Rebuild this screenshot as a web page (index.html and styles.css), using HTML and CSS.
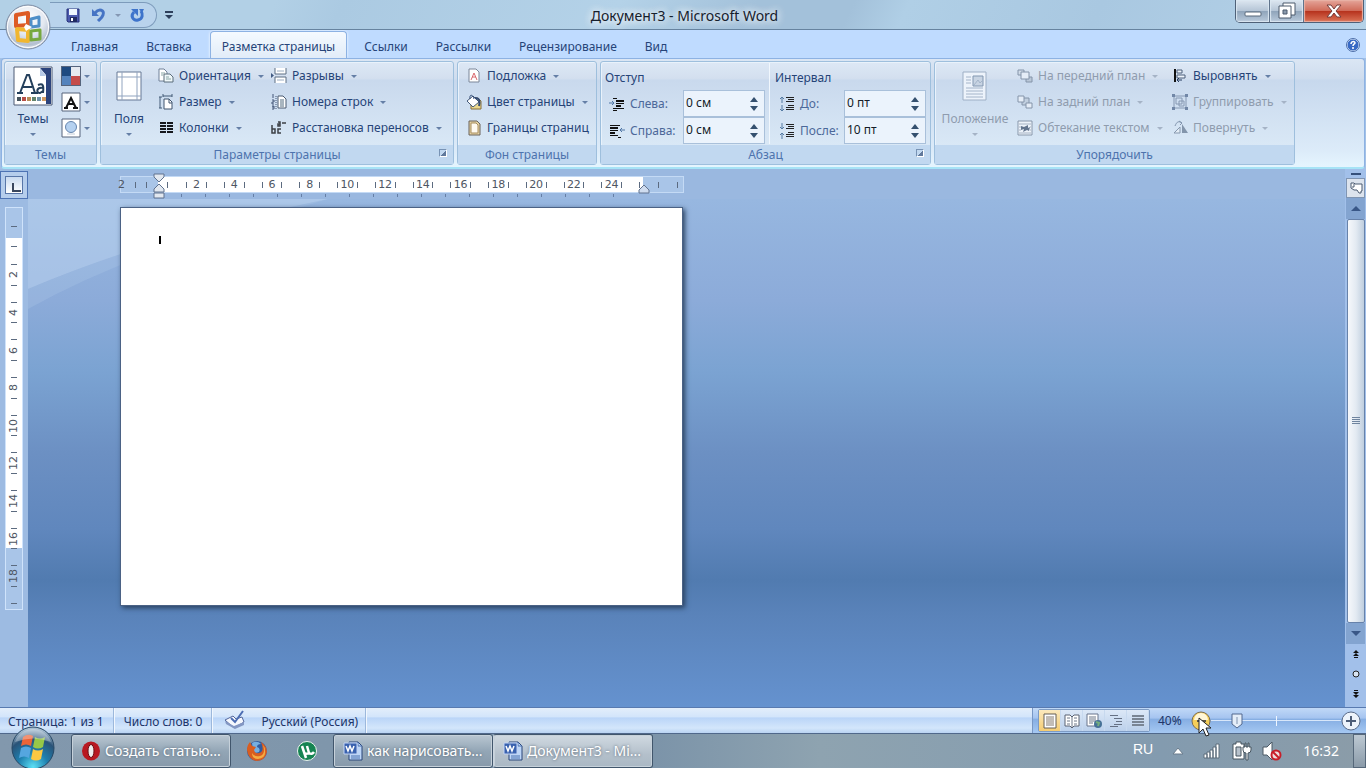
FILE: index.html
```html
<!DOCTYPE html>
<html lang="ru">
<head>
<meta charset="utf-8">
<title>Документ3 - Microsoft Word</title>
<link rel="stylesheet" href="styles.css">
</head>
<body>
<header class="titlebar">
  <button class="office" aria-label="Кнопка Office">
    <svg viewBox="0 0 46 46"><defs><radialGradient id="orb" cx=".5" cy=".3" r=".75"><stop offset="0" stop-color="#fff"/><stop offset=".5" stop-color="#e3e8f0"/><stop offset=".8" stop-color="#b3bfd0"/><stop offset="1" stop-color="#f4f8fc"/></radialGradient></defs>
      <circle cx="23" cy="23" r="22" fill="url(#orb)" stroke="#7d8ca3"/><circle cx="23" cy="23" r="20.500" fill="none" stroke="#fff"/>
      <g fill="none" stroke-linejoin="round"><path d="M11 11l12-2v12l-12 1z" stroke="#dd5b25" stroke-width="4"/><path d="M26 15l8-2v9l-8 1z" stroke="#4f8fc8" stroke-width="3"/><path d="M12 25l11 1v11l-10-1z" stroke="#f1b62f" stroke-width="4"/><path d="M26 27l9-1v9l-9 1z" stroke="#76a83e" stroke-width="3"/></g>
      <path d="M21 20l6 3-6 4-2-4z" fill="#fff"/></svg>
  </button>
  <div class="qat">
    <button aria-label="Сохранить"><svg class="ic" viewBox="0 0 16 16"><path d="M2 2h12v13H3l-1-1z" fill="#4b59ad" stroke="#28337b"/><path d="M4 2h8v6H4z" fill="#eef5fd"/><path d="M5 10h7v5H5z" fill="#202a60"/><path d="M6 11h2v3H6z" fill="#fff"/></svg></button>
    <button aria-label="Отменить"><svg class="ic" viewBox="0 0 16 16"><path d="M4 6c4-5 10-3 8 2-1 3-3 4-5 6" fill="none" stroke="#4674c4" stroke-width="3"/><path d="M1 2v7h7z" fill="#4674c4"/></svg></button>
    <button class="narrow" aria-label="Список отмены"><i class="arr dim"></i></button>
    <button aria-label="Повторить"><svg class="ic" viewBox="0 0 16 16"><path d="M5 5c-4 4-1 9 4 8 5-1 5-6 3-9" fill="none" stroke="#3e74cb" stroke-width="3"/><path d="M2 2h7v7zM10 2h5l-2 4z" fill="#3e74cb"/></svg></button>
  </div>
  <button class="more" aria-label="Настройка панели"><i class="arr dark"></i></button>
  <h1>Документ3 - Microsoft Word</h1>
  <div class="winbtns">
    <button aria-label="Свернуть"><svg viewBox="0 0 18 18"><rect x="1" y="10" width="16" height="4" rx="1" fill="#fff" stroke="#59687b"/></svg></button>
    <button aria-label="Восстановить"><svg viewBox="0 0 18 18"><g fill="#fff" stroke="#4d5b6c"><path d="M5 1h12v12H5z"/><path d="M1 4h12v12H1z"/><path d="M5 8h4v4H5z" fill="#8b9aac"/></g></svg></button>
    <button class="close" aria-label="Закрыть"><svg viewBox="0 0 18 18"><path d="M2 3h4l3 4 3-4h4l-5 6 5 6h-4l-3-4-3 4H2l5-6z" fill="#fff" stroke="#743c3b"/></svg></button>
  </div>
</header>

<nav class="tabs">
  <button>Главная</button><button>Вставка</button><button class="on">Разметка страницы</button><button>Ссылки</button><button>Рассылки</button><button>Рецензирование</button><button>Вид</button>
  <button class="help" aria-label="Справка"><svg viewBox="0 0 14 14"><circle cx="7" cy="7" r="6" fill="#3869c4" stroke="#d9e9ff"/><circle cx="7" cy="7" r="6.500" fill="none" stroke="#4e6fa8"/><path d="M5 6c0-3 4-3 4-1 0 1-2 1-2 3M7 9v2" fill="none" stroke="#fff" stroke-width="1.500"/></svg></button>
</nav>

<main class="ribbon">
  <section class="group themes">
    <div class="body">
      <button class="big"><svg viewBox="0 0 40 40"><path d="M1 1h38v38H1z" fill="#fff" stroke="#4d5b75"/><path d="M27 2h11v36h-5V9z" fill="#2b437c"/><path d="M27 2l6 8h-6z" fill="#b6c9e6"/><path d="M7 27l7-18h2l6 18M10 21h9M4 27h6M18 27h7" fill="none" stroke="#243f5b" stroke-width="2"/><path d="M25 19c5-2 6 0 5 8M30 22c-7-1-7 5-3 5l3-2" fill="none" stroke="#243f5b" stroke-width="2"/><path d="M4 31h4v4H4z" fill="#46545d"/><path d="M9 31h4v4H9z" fill="#b84e46"/><path d="M14 31h4v4h-4z" fill="#b88c58"/><path d="M19 31h4v4h-4z" fill="#63846b"/><path d="M24 31h4v4h-4z" fill="#6d91a8"/><path d="M29 31h4v4h-4z" fill="#d19b64"/></svg><span>Темы</span><i class="arr"></i></button>
      <div class="minis">
        <button aria-label="Цвета"><svg viewBox="0 0 20 20"><path d="M0 0h10v10H0z" fill="#1e4a80"/><path d="M10 0h10v10H10z" fill="#e6e9f0"/><path d="M0 10h10v10H0z" fill="#5483bd"/><path d="M10 10h10v10H10z" fill="#c44c4b"/><path d="M0 0h20v20H0z" fill="none" stroke="#56647c" stroke-width="2"/></svg><i class="arr"></i></button>
        <button aria-label="Шрифты"><svg viewBox="0 0 20 20"><path d="M1 1h18v18H1z" fill="#fff" stroke="#56647c"/><path d="M5 16L10 6l5 10M7 12h6M3 16h4M12 16h5" fill="none" stroke="#111" stroke-width="2"/></svg><i class="arr"></i></button>
        <button aria-label="Эффекты"><svg viewBox="0 0 20 20"><path d="M1 1h18v18H1z" fill="#fff" stroke="#56647c"/><circle cx="10" cy="9" r="5.500" fill="#b5d1f0" stroke="#6685ae"/><path d="M6 16h8" stroke="#c3ccd8"/></svg><i class="arr"></i></button>
      </div>
    </div>
    <footer>Темы</footer>
  </section>
  <section class="group params">
    <div class="body">
      <button class="big"><svg viewBox="0 0 40 40"><path d="M8 6h24v28H8z" fill="#fff" stroke="#667995"/><path d="M13 6v28M28 6v28M8 11h24M8 30h24" stroke="#91a4bf"/></svg><span>Поля</span><i class="arr"></i></button>
      <div class="col c1">
        <button><svg class="ic" viewBox="0 0 16 16"><path d="M1 1h5l3 3v9H1z" fill="#fff" stroke="#718199"/><path d="M6 6h6l3 3v5H6z" fill="#eff7f9" stroke="#5b6d7b"/><path d="M3 5h4M3 7h2M8 9h3M8 11h5" stroke="#8ba7a6"/></svg>Ориентация<i class="arr"></i></button>
        <button><svg class="ic" viewBox="0 0 16 16"><path d="M6 5h5l3 3v7H6z" fill="#fff" stroke="#40546e"/><path d="M11 5v4h3" fill="none" stroke="#40546e"/><path d="M1 3h3M2 3v11M1 14h3M5 2h9M5 0v3M14 0v3" fill="none" stroke="#435a76"/></svg>Размер<i class="arr"></i></button>
        <button><svg class="ic" viewBox="0 0 16 16"><path d="M2 2h6v2H2zM2 5h6v2H2zM2 8h6v2H2zM2 11h6v2H2zM9 2h6v2H9zM9 5h6v2H9zM9 8h6v2H9zM9 11h6v2H9z" fill="#16181d"/></svg>Колонки<i class="arr"></i></button>
      </div>
      <div class="col c2">
        <button><svg class="ic" viewBox="0 0 16 16"><path d="M4 0v6h11V0M4 15V9h11v6" fill="#fff" stroke="#5c6f83"/><path d="M6 3h7M6 12h7" stroke="#9caec3"/><path d="M0 5v5l3-2.500z" fill="#415b83"/></svg>Разрывы<i class="arr"></i></button>
        <button><svg class="ic" viewBox="0 0 16 16"><path d="M7 2h5l3 3v9H7z" fill="#fff" stroke="#4b5b70"/><path d="M9 6h4M9 8h4M9 10h4M9 12h4" stroke="#526c80"/><path d="M2 0v4M1 6h2v2H1v2h2M1 12h2v1H1M3 13v2H1" fill="none" stroke="#425576"/><path d="M5 2v13" stroke="#425576" stroke-dasharray="1 1"/></svg>Номера строк<i class="arr"></i></button>
        <button><svg class="ic" viewBox="0 0 16 16"><path d="M1 5v8h3V9H1M7 2h2v4H7V4h2M11 3h4M10 9H7v4h3" fill="none" stroke="#3d4046" stroke-width="1.500"/></svg>Расстановка переносов<i class="arr"></i></button>
      </div>
    </div>
    <footer>Параметры страницы<button class="launch" aria-label="Параметры страницы"></button></footer>
  </section>
  <section class="group background">
    <div class="body">
      <div class="col">
        <button><svg class="ic" viewBox="0 0 16 16"><path d="M3 1h7l3 3v10H3z" fill="#fff" stroke="#7a8699"/><path d="M5 12l3-7 3 7M6 9h4" fill="none" stroke="#d9696e"/></svg>Подложка<i class="arr"></i></button>
        <button><svg class="ic" viewBox="0 0 16 16"><path d="M5 4h7l3 3v8H5z" fill="#edd98e" stroke="#856f3a"/><path d="M1 7l6-5 6 6-6 5z" fill="#fff" stroke="#445a79"/><path d="M4 5c-1-5 3-5 4 0" fill="none" stroke="#344c76"/><path d="M9 4c5 0 5 4 4 8" fill="none" stroke="#344c76" stroke-width="2"/></svg>Цвет страницы<i class="arr"></i></button>
        <button><svg class="ic" viewBox="0 0 16 16"><path d="M3 1h8l3 3v11H3z" fill="#e3d2a6" stroke="#6a635a"/><path d="M5 3h5l2 2v8H5z" fill="#fffaf1" stroke="#a98e5e"/></svg>Границы страниц</button>
      </div>
    </div>
    <footer>Фон страницы</footer>
  </section>
  <section class="group para">
    <div class="body">
      <div class="spin">
        <b>Отступ</b>
        <div class="row"><svg class="ic" viewBox="0 0 16 16"><path d="M4 2h4v1H4zM7 4h8v2H7zM7 7h8v1H7zM7 9h5v2H7zM4 12h11v1H4zM4 14h4v1H4z" fill="#111"/><path d="M0 7h5M3 5l2 2-2 2" fill="none" stroke="#4f76a6"/></svg><label for="left">Слева:</label><span class="num"><input id="left" value="0 см"><span><button aria-label="Больше"></button><button aria-label="Меньше"></button></span></span></div>
        <div class="row"><svg class="ic" viewBox="0 0 16 16"><path d="M1 2h10v1H1zM1 4h8v2H1zM1 7h8v1H1zM1 9h5v2H1zM1 12h8v1H1zM9 14h3v1H9z" fill="#111"/><path d="M16 7h-5M13 5l-2 2 2 2" fill="none" stroke="#4f76a6"/></svg><label for="right">Справа:</label><span class="num"><input id="right" value="0 см"><span><button aria-label="Больше"></button><button aria-label="Меньше"></button></span></span></div>
      </div>
      <div class="spin second">
        <b>Интервал</b>
        <div class="row"><svg class="ic" viewBox="0 0 16 16"><path d="M7 1h8v1H7zM9 3h6v1H9zM7 5h8v1H7zM9 9h6v1H9zM7 11h8v1H7zM7 13h8v1H7z" fill="#222"/><path d="M3 7V1M1 3l2-2 2 2M3 9v6M1 13l2 2 2-2" fill="none" stroke="#557ba3"/></svg><label for="before">До:</label><span class="num"><input id="before" value="0 пт"><span><button aria-label="Больше"></button><button aria-label="Меньше"></button></span></span></div>
        <div class="row"><svg class="ic" viewBox="0 0 16 16"><path d="M7 1h8v1H7zM9 3h6v1H9zM7 5h8v1H7zM9 9h6v1H9zM7 11h8v1H7zM7 13h8v1H7z" fill="#222"/><path d="M3 0v6M1 4l2 2 2-2M3 16v-6M1 12l2-2 2 2" fill="none" stroke="#557ba3"/></svg><label for="after">После:</label><span class="num"><input id="after" value="10 пт"><span><button aria-label="Больше"></button><button aria-label="Меньше"></button></span></span></div>
      </div>
    </div>
    <footer>Абзац<button class="launch" aria-label="Абзац"></button></footer>
  </section>
  <section class="group arrange">
    <div class="body">
      <button class="big off" disabled><svg viewBox="0 0 40 40"><path d="M8 6h23v28H8z" fill="#edf3fb" stroke="#9eafc5"/><path d="M18 10h10v10H18z" fill="#c8d4e3" stroke="#8297b1"/><path d="M19 19l4-5 2 3 3-3M11 11h5M11 14h5M11 17h5M11 22h17M11 25h17M11 28h17M11 31h17" fill="none" stroke="#a4b4c9"/></svg><span>Положение</span><i class="arr"></i></button>
      <div class="col c1">
        <button disabled><svg class="ic" viewBox="0 0 16 16"><g stroke="#8494a9"><path d="M1 2h6v5H1z" fill="#d0dbe8"/><path d="M9 9h6v5H9z" fill="#b9c7d8"/><path d="M4 4h8v7H4z" fill="#e5edf7"/></g></svg>На передний план<i class="arr"></i></button>
        <button disabled><svg class="ic" viewBox="0 0 16 16"><g stroke="#8494a9"><path d="M5 4h7v7H5z" fill="#c1cfdf"/><path d="M1 2h6v6H1zM9 9h6v5H9z" fill="#e5edf7"/></g></svg>На задний план<i class="arr"></i></button>
        <button disabled><svg class="ic" viewBox="0 0 16 16"><path d="M1 1h14v14H1z" fill="#edf3fa" stroke="#8796aa"/><path d="M2 4h12M2 7h2M13 7h1M2 10h2M13 10h1M2 13h12" stroke="#a6b3c4"/><path d="M4 6l3 1 4-2v3l2-1-1 4-2-1-4 2 1-3-3 1z" fill="#63758e"/></svg>Обтекание текстом<i class="arr"></i></button>
      </div>
      <div class="col c2">
        <button><svg class="ic" viewBox="0 0 16 16"><path d="M3 1v13" stroke="#111" stroke-width="2"/><path d="M5 2h5v3H5zM5 7h8v3H5z" fill="#eef4fb" stroke="#4c5f7b"/><path d="M5 12h5M7 10l-2 2 2 2" fill="none" stroke="#253b5e"/></svg>Выровнять<i class="arr"></i></button>
        <button disabled><svg class="ic" viewBox="0 0 16 16"><path d="M2 2h12v12H2zM4 4h6v6H4zM7 7h5v5H7z" fill="none" stroke="#8698b2"/><path d="M0 0h3v3H0zM13 0h3v3h-3zM0 13h3v3H0zM13 13h3v3h-3z" fill="#7187a7"/></svg>Группировать<i class="arr"></i></button>
        <button disabled><svg class="ic" viewBox="0 0 16 16"><path d="M8 13V7l-6 6z" fill="#e4edf6" stroke="#8798ae"/><path d="M10 13V4l6 9z" fill="#8395ab"/><path d="M3 6c2-5 4-5 7-3M7 1l3 2-2 2" fill="none" stroke="#8295ae"/></svg>Повернуть<i class="arr"></i></button>
      </div>
    </div>
    <footer>Упорядочить</footer>
  </section>
</main>

<div class="work">
  <aside class="vside">
    <button class="tabstop" aria-label="Табуляция"><span></span></button>
    <div class="vruler"><i class="lead"></i><div class="vcells"><span><b>2</b></span><span><b>4</b></span><span><b>6</b></span><span><b>8</b></span><span><b>10</b></span><span><b>12</b></span><span><b>14</b></span><span><b>16</b></span><span><b>18</b></span></div><i class="tail"></i></div>
  </aside>
  <div class="center">
    <div class="hbar"><div class="hruler">
      <div class="lead"><b>2</b><i></i><i></i></div>
      <div class="cells"><i></i><div><b>2</b></div><div><b>4</b></div><div><b>6</b></div><div><b>8</b></div><div><b>10</b></div><div><b>12</b></div><div><b>14</b></div><div><b>16</b></div><div><b>18</b></div><div><b>20</b></div><div><b>22</b></div><div><b>24</b></div><i></i></div>
      <div class="tail"><i></i><i></i></div>
      <svg class="mark m1" viewBox="0 0 12 26"><path d="M1 1h10v3L6 9 1 4zM6 11l5 5v3H1v-3zM1 20h10v5H1z" fill="#e2e8f0" stroke="#61738f"/></svg>
      <svg class="mark m2" viewBox="0 0 12 10"><path d="M6 1l5 5v3H1V6z" fill="#cfdcef" stroke="#61738f"/></svg>
    </div></div>
    <div class="canvas">
      <svg class="swoosh" viewBox="0 0 300 110" preserveAspectRatio="none"><path d="M0 0h300Q130 35 0 90z" fill="#c6dcf4" opacity=".45"/><path d="M0 90Q130 35 300 0L200 30Q90 60 0 110z" fill="#bdd5f2" opacity=".2"/></svg>
      <article class="page" contenteditable="true" aria-label="Документ"><i class="caret"></i></article>
    </div>
  </div>
  <aside class="scroll">
    <i class="split"></i>
    <button class="rulerbtn" aria-label="Линейка"><svg viewBox="0 0 14 14"><path d="M2 2h3l1 1h7v7h-1v2h-2L8 9H5L2 7z" fill="#fff" stroke="#4b5a70"/><path d="M5 3v3H3" fill="none" stroke="#4b5a70"/></svg></button>
    <button class="up" aria-label="Вверх"></button>
    <div class="thumb"><i></i></div>
    <button class="down" aria-label="Вниз"></button>
    <button class="jump" aria-label="Предыдущая страница"><svg viewBox="0 0 10 10"><path d="M5 1l3 3H2zM5 4l3 3H2zM3 8h4v1H3z" fill="#111"/></svg></button>
    <button class="jump" aria-label="Выбор объекта"><svg viewBox="0 0 10 10"><circle cx="5" cy="5" r="3" fill="#d9e4f2" stroke="#222"/></svg></button>
    <button class="jump" aria-label="Следующая страница"><svg viewBox="0 0 10 10"><path d="M3 1h4v1H3zM2 3h6L5 6zM2 6h6L5 9z" fill="#111"/></svg></button>
  </aside>
</div>

<footer class="status">
  <span>Страница: 1 из 1</span><span>Число слов: 0</span>
  <span class="lang"><svg viewBox="0 0 22 20"><path d="M1 10l8-4 3 3 6-2 2 5-10 6z" fill="#f5f8fe" stroke="#53669b"/><path d="M1 11l9 5 10-4v3l-9 4-9-5z" fill="#8498c4"/><path d="M7 8l4 4 8-11" fill="none" stroke="#4c6db3" stroke-width="2"/></svg>Русский (Россия)</span>
  <div class="right">
    <div class="views">
      <button class="on" aria-label="Разметка страницы"><svg viewBox="0 0 18 16"><path d="M3 1h12v14H3z" fill="#fff" stroke="#655f57"/><path d="M5 4h8M5 6h8M5 8h8M5 10h8M5 12h8" stroke="#847b6f"/></svg></button>
      <button aria-label="Режим чтения"><svg viewBox="0 0 18 16"><path d="M2 2h5l2 2 2-2h5v11h-5l-2 2-2-2H2z" fill="#fff" stroke="#5a6272"/><path d="M9 4v10M4 5h3M4 8h3M4 11h3M11 5h3M11 8h3M11 11h3" stroke="#6f7888"/></svg></button>
      <button aria-label="Веб-документ"><svg viewBox="0 0 18 16"><path d="M2 1h11v12H2z" fill="#fff" stroke="#69758c"/><path d="M4 4h7M4 6h7M4 8h7M4 10h4" stroke="#6f7888"/><circle cx="13" cy="11" r="4" fill="#467197"/><path d="M11 9l3 1-1 3" fill="none" stroke="#73ad7e" stroke-width="2"/></svg></button>
      <button aria-label="Структура"><svg viewBox="0 0 18 16"><path d="M3 2h8v1H3zM7 5h8v1H7zM9 8h6v1H9zM7 11h8v1H7zM3 13h8v1H3z" fill="#667184"/></svg></button>
      <button aria-label="Черновик"><svg viewBox="0 0 18 16"><path d="M3 2h12v2H3zM3 5h12v2H3zM3 8h12v2H3zM3 11h12v2H3z" fill="#7a8594"/></svg></button>
    </div>
    <label for="zoom">40%</label>
    <button class="round minus" aria-label="Уменьшить"><svg viewBox="0 0 20 20"><circle cx="10" cy="10" r="9" fill="#f5ce58" stroke="#7c6c52"/><path d="M3 9a7 7 0 0114 0z" fill="#fff6d7"/><path d="M6 10h9" stroke="#5c5646" stroke-width="2"/></svg><svg class="cursor" viewBox="0 0 13 20"><path d="M1 1v15l4-4 3 7 3-1-3-7h5z" fill="#fff" stroke="#222"/></svg></button>
    <span class="slide"><input id="zoom" type="range" min="0" max="100" value="17"></span>
    <button class="round" aria-label="Увеличить"><svg viewBox="0 0 20 20"><circle cx="10" cy="10" r="9" fill="#edf3fb" stroke="#5b6c89"/><path d="M5 10h10M10 5v10" stroke="#4d5d78" stroke-width="2"/></svg></button>
  </div>
</footer>

<div class="taskbar">
  <button class="start" aria-label="Пуск"><svg viewBox="0 0 44 44"><defs><radialGradient id="st" cx=".5" cy=".95" r=".9"><stop offset="0" stop-color="#5ce0f5"/><stop offset=".4" stop-color="#1e7fae"/><stop offset=".75" stop-color="#2a5378"/><stop offset="1" stop-color="#a8bfd2"/></radialGradient></defs><circle cx="22" cy="22" r="21" fill="url(#st)" stroke="#274865"/><path d="M12 11q5-4 10-1l-2 10q-5-3-10 0z" fill="#eb6437"/><path d="M24 11q5 3 10 0l-2 10q-5 3-10 0z" fill="#97c748"/><path d="M10 22q5-3 10 0l-2 10q-5-3-10 0z" fill="#55a6df"/><path d="M22 23q5 3 10 0l-2 10q-5 3-10 0z" fill="#fbc842"/><path d="M4 16a19 19 0 0136 0q-18-7-36 0z" fill="#fff" opacity=".3"/></svg></button>
  <button class="task opera"><svg viewBox="0 0 20 20"><ellipse cx="10" cy="10" rx="9" ry="9.500" fill="#b81922"/><ellipse cx="10" cy="10" rx="3" ry="6.500" fill="#eee" stroke="#6d0e14"/></svg>Создать статью...</button>
  <button class="pin" aria-label="Firefox"><svg viewBox="0 0 22 22"><circle cx="11" cy="11" r="10" fill="#315b9e"/><path d="M6 3q5-3 9 1-4 0-4 3 4 1 2 5-5 2-6-2z" fill="#76aee0"/><path d="M1 10Q1 5 4 2l2 4 4 1-2 3q1 4 5 3 5-1 3-8l-1-3q6 4 6 10-2 9-11 9Q2 19 1 10z" fill="#d95d20"/><path d="M17 5q3 9-3 11-6 1-8-3 0 6 6 6 8-1 7-8 0-4-2-6z" fill="#f4ac42"/></svg></button>
  <button class="pin" aria-label="uTorrent"><svg viewBox="0 0 22 22"><circle cx="11" cy="11" r="9.500" fill="#168452" stroke="#eaf3ee"/><path d="M6 6l2 6q1 3 5 1l-2-7M13 13q3 2 5-1M8 12l2 6" fill="none" stroke="#fff" stroke-width="2.500"/></svg></button>
  <div class="pair">
    <button class="task"><svg viewBox="0 0 20 20"><path d="M6 1h9l4 4v14H6z" fill="#bcd5f7" stroke="#284479"/><path d="M15 1v4h4M8 15h9M8 17h9" fill="none" stroke="#4d73b0"/><path d="M1 2h13v11H1z" fill="#3a62af" stroke="#c2d4f4"/><path d="M3 5l2 5 2-5 2 5 2-5" fill="none" stroke="#fff" stroke-width="1.500"/></svg>как нарисовать...</button>
    <button class="task on"><svg viewBox="0 0 20 20"><path d="M6 1h9l4 4v14H6z" fill="#bcd5f7" stroke="#284479"/><path d="M15 1v4h4M8 15h9M8 17h9" fill="none" stroke="#4d73b0"/><path d="M1 2h13v11H1z" fill="#3a62af" stroke="#c2d4f4"/><path d="M3 5l2 5 2-5 2 5 2-5" fill="none" stroke="#fff" stroke-width="1.500"/></svg>Документ3 - Mi...</button>
  </div>
  <div class="tray">
    <span class="ru">RU</span>
    <svg class="t1" viewBox="0 0 12 8"><path d="M1 7l5-6 5 6z" fill="#fff" stroke="#6a7c8d"/></svg>
    <svg viewBox="0 0 20 20"><g fill="#fff" stroke="#5c6c7a"><path d="M2 13h3v4H2zM5 11h3v6H5zM8 9h3v8H8zM11 6h3v11h-3zM14 3h3v14h-3z"/></g></svg>
    <svg viewBox="0 0 20 20"><g stroke="#46545f"><path d="M4 1h5v2h3v15H1V3h3z" fill="#fff"/><path d="M4 6h5v9H4z" fill="#b8c2cc"/><path d="M11 6h2V2h1v4h2V2h1v4h2v3q0 3-3 3v7h-2v-7q-3 0-3-3z" fill="#fff"/></g></svg>
    <svg viewBox="0 0 20 20"><path d="M1 6h4l5-5v18l-5-5H1z" fill="#fff" stroke="#4b5965"/><circle cx="14" cy="14" r="4.500" fill="#edd" stroke="#c81e28" stroke-width="2"/><path d="M11 11l6 6" stroke="#c81e28" stroke-width="2"/></svg>
    <time>16:32</time>
    <button class="desk" aria-label="Рабочий стол"></button>
  </div>
</div>
</body>
</html>
```
FILE: styles.css
```css
* { box-sizing: border-box; }
body { margin: 0; height: 100vh; display: flex; flex-direction: column; overflow: hidden; font: 12px/16px "Noto Sans", "Open Sans", sans-serif; color: #264478; background: #a3c1e6; }
button { font: inherit; color: inherit; background: none; border: 0; padding: 0; margin: 0; white-space: nowrap; }
svg { display: block; flex: none; }
.ic { width: 16px; height: 16px; }
.arr { display: block; flex: none; width: 0; height: 0; border: 3px solid transparent; border-top-color: #657fa6; border-bottom: 0; }
.arr.dim { border-top-color: #8497b3; }

.titlebar { position: relative; height: 30px; flex: none; display: flex; align-items: flex-start; border-bottom: 1px solid #66839f; background: linear-gradient(115deg, #b2d0e6 0 20%, #abcae2 25%, #b4d2e8 45%, #a3c1da 55% 62%, #b0cfe6 66%, #a9c8e1 80%, #b5d2e8); }
.office { position: absolute; left: 5px; top: 4px; width: 46px; height: 46px; z-index: 3; }
.qat { margin: 2px 0 0 50px; height: 26px; width: 107px; padding-left: 15px; display: flex; align-items: center; gap: 10px; border: 1px solid #7d9bbb; border-left: 0; border-radius: 0 13px 13px 0; background: #b9d3ec; }
.qat .narrow { margin: 0 -2px; }
.more { margin: 11px 0 0 8px; padding-top: 2px; border-top: 2px solid #2d3f5b; }
.arr.dark { border-width: 4px 4px 0; border-top-color: #2d3f5b; }
h1 { flex: 1; margin: 6px 0 0; font-size: 14px; line-height: 20px; font-weight: 400; text-align: center; color: #16202c; text-shadow: 0 0 8px #fff, 0 0 8px #fff; padding-right: 39px; }
.winbtns { display: flex; height: 23px; margin-right: 2px; border: 1px solid #4f6178; border-top: 0; border-radius: 0 0 5px 5px; overflow: hidden; }
.winbtns button { width: 34px; display: grid; place-items: center; border-right: 1px solid #60748c; background: linear-gradient(#dde7f1, #b4c4d5 50%, #8fa4ba 51%, #b9cadb); box-shadow: inset 0 0 1px 1px #dbe7f1; }
.winbtns svg { width: 18px; height: 18px; }
.winbtns .close { width: 59px; border: 0; background: linear-gradient(#e5a59a, #cf6a58 50%, #b6321d 51%, #db7458); box-shadow: inset 0 0 1px 1px #e8b2a6; }

.tabs { height: 28px; flex: none; display: flex; align-items: flex-end; padding-left: 57px; background: #bfdbff; }
.tabs button { height: 26px; padding: 4px 14px 0; }
.tabs .on { height: 27px; padding: 3px 11px 0; margin: 0 3px 0 4px; border: 1px solid #8db2e3; border-bottom: 0; border-radius: 4px 4px 0 0; background: linear-gradient(#f5faff, #e1ecf8); box-shadow: 0 0 3px #fff; }
.tabs .help { margin-left: auto; padding: 0 6px; }
.help svg { width: 14px; height: 14px; }

.ribbon { flex: none; display: flex; gap: 3px; margin: 0 1px; padding: 2px; height: 111px; border: 1px solid #8db2e3; border-bottom: 2px solid #a6e3f6; border-radius: 4px; background: linear-gradient(#dbe6f4, #cfddee 18%, #c7d8ed 20%, #dcebf9 85%, #e5f5fe); }
.group { display: flex; flex-direction: column; border: 1px solid #9ebfdd; border-radius: 3px; background: linear-gradient(#dde8f5, #d3dfef 16%, #c9d9ed 18%, #d9e8f6 82%); box-shadow: inset 1px 1px 0 #e9f2fb; }
.group > footer { position: relative; height: 19px; text-align: center; line-height: 20px; color: #4d73ad; background: #c1d8f0; }
.body { flex: 1; display: flex; align-items: flex-start; padding-top: 1px; min-height: 0; }
.themes { width: 93px; }
.params { width: 354px; }
.background { width: 140px; }
.para { width: 331px; }
.arrange { width: 361px; }
.big { display: flex; flex-direction: column; align-items: center; width: 56px; padding-top: 3px; }
.big svg { width: 40px; height: 40px; }
.big span { margin: 5px 0 6px; }
.minis button { display: flex; align-items: center; gap: 3px; height: 26px; }
.minis svg { width: 20px; height: 20px; }
.col { display: flex; flex-direction: column; }
.col button { display: flex; align-items: center; height: 26px; gap: 5px; }
.col .arr { margin-left: 2px; }
.col :disabled, .off { color: #8f9cae; }
:disabled .arr { border-top-color: #a5b3c6; }
.params .c1 { width: 113px; margin-left: 1px; }
.background .col { margin-left: 8px; }
.arrange .big { width: 80px; }
.arrange .c1 { width: 155px; margin-left: 2px; }
.launch { position: absolute; right: 6px; top: 4px; width: 8px; height: 8px; border: 1px solid #7893b5; border-right-color: #fff; border-bottom-color: #fff; background: linear-gradient(135deg, transparent 50%, #61799c 51%); }
.spin { width: 168px; padding: 6px 4px 0 4px; }
.spin b { display: block; font-weight: 400; height: 21px; line-height: 18px; }
.spin.second { width: 157px; padding: 6px 0 0 5px; border-left: 1px solid #f1f7fd; }
.row { display: flex; align-items: center; height: 27px; }
.row .ic { margin: 0 5px 0 4px; }
.row label { flex: 1; color: #4c6899; }
.num { display: flex; width: 82px; height: 27px; border: 1px solid #a9c0da; background: #ebf3fc; }
.num input { min-width: 0; flex: 1; border: 0; background: none; font: inherit; padding: 0 0 1px 2px; color: #141c28; }
.num > span { display: flex; flex-direction: column; justify-content: center; gap: 4px; padding-right: 6px; }
.num button { border: 4px solid transparent; border-top: 0; border-bottom: 5px solid #34506f; }
.num button + button { border-top: 5px solid #34506f; border-bottom: 0; }

.work { flex: 1; min-height: 0; display: flex; }
.vside { width: 28px; flex: none; background: #9dbbe2; display: flex; flex-direction: column; align-items: flex-start; }
.tabstop { width: 28px; height: 28px; margin: 2px 0 8px; border: 1px solid #4d73b4; padding: 4px; background: #b5cdec; }
.tabstop span { display: block; height: 18px; border: 1px solid #5876a8; background: linear-gradient(#c9daf0, #fff); padding: 6px; }
.tabstop span::before { content: ""; display: block; width: 7px; height: 7px; border: solid #39465e; border-width: 0 0 2px 2px; }
.vruler { margin-left: 5px; width: 18px; height: 403px; border: 1px solid #cfe3fb; display: flex; flex-direction: column; background: linear-gradient(#a9c5e8 30px, #fff 30px 340px, #a9c5e8 340px); color: #4e5663; }
.vruler .lead { height: 48px; display: flex; flex-direction: column; justify-content: space-between; align-items: center; padding: 18px 0 9px; }
.lead::before, .vruler .lead::after, .vruler .tail::before { content: ""; width: 6px; height: 1px; background: #5c6b80; }
.vcells { height: 339px; display: flex; flex-direction: column; }
.vcells span { flex: 1; display: flex; flex-direction: column; align-items: center; justify-content: space-between; padding: 8px 0; }
.vcells span::before, .vcells span::after { content: ""; flex: none; width: 6px; height: 1px; background: #5c6b80; }
.vcells b { writing-mode: vertical-rl; transform: rotate(180deg); font: 11px/14px "DejaVu Sans", sans-serif; }
.vruler .tail { display: flex; justify-content: center; padding-top: 8px; }
.center { flex: 1; min-width: 0; display: flex; flex-direction: column; }
.hbar { height: 30px; flex: none; padding: 7px 0 0 92px; background: #9ab8e0; }
.hruler { position: relative; display: flex; width: 564px; height: 17px; border: 1px solid #c4daf5; color: #4e5663; background: #a9c5e8; }
.hruler::after { content: ""; position: absolute; left: 38px; right: 48px; top: 17px; height: 3px; background: repeating-linear-gradient(90deg, transparent 0 22px, #667fa6 22px 23px, transparent 23px 24px); }
.hruler b { font: 11px/15px "DejaVu Sans", sans-serif; }
.hruler i { width: 1px; height: 6px; background: #5c6b80; }
.hruler .lead { width: 38px; display: flex; justify-content: space-between; align-items: center; padding-right: 9px; margin-left: -3px; }
.hruler .lead::before { display: none; }
.cells { display: flex; width: 485px; align-items: center; margin-left: 2px; background: #fff; padding: 0 3px 0 9px; }
.cells > i { flex: none; }
.cells > i + div { margin-left: 9px; }
.cells > i:last-child { margin-left: 9px; }
.cells div { flex: 1 1 0; min-width: 0; display: flex; align-items: center; justify-content: space-between; padding: 0 8px 0 9px; }
.cells div::before, .cells div::after { content: ""; flex: none; width: 1px; height: 6px; background: #5c6b80; }
.hruler .tail { flex: 1; display: flex; align-items: center; justify-content: space-between; padding: 0 5px 0 15px; }
.mark { position: absolute; z-index: 1; width: 12px; }
.m1 { left: 32px; top: -4px; height: 26px; }
.m2 { left: 517px; top: 7px; height: 10px; }
.canvas { position: relative; flex: 1; padding: 8px 0 0 92px; background: linear-gradient(#97b7e0, #8cabd9 20%, #7ba3d2 34%, #6c90c3 50%, #6087bd 65%, #517bb0 75%, #5a83ba 82%, #6592cf); }
.swoosh { position: absolute; left: 0; top: 0; width: 300px; height: 110px; }
.page { position: relative; width: 563px; height: 399px; padding: 28px 38px; background: #fff; border: 1px solid #4b6285; box-shadow: 2px 2px 5px #29405f; outline: 0; }
.caret { display: block; width: 2px; height: 8px; background: #000; }
.scroll { width: 21px; flex: none; display: flex; flex-direction: column; align-items: center; background: #a2c0ea; padding: 4px 0 3px; }
.split { width: 10px; height: 2px; background: #344f7a; }
.rulerbtn { width: 19px; height: 20px; margin-top: 3px; display: grid; place-items: center; border: 1px solid #8095b2; background: #dce3ed; }
.rulerbtn svg { width: 14px; height: 14px; }
.up, .down { width: 19px; height: 21px; flex: none; background: #83a4d0; display: grid; place-items: center; }
.up::before, .down::before { content: ""; border: 5px solid transparent; border-top: 0; border-bottom: 5px solid #395787; }
.down::before { border-top: 5px solid #395787; border-bottom: 0; }
.thumb { width: 18px; flex: 1; display: grid; place-items: center; border: 1px solid #6782aa; border-radius: 2px; background: linear-gradient(90deg, #f6f8fb, #e3eaf2 50%, #bfcede); }
.thumb i { width: 8px; height: 8px; background: repeating-linear-gradient(#6f849f 0 1px, transparent 1px 2px); }
.jump { height: 20px; flex: none; }
.jump svg { width: 10px; height: 10px; }

.status { height: 27px; flex: none; display: flex; align-items: stretch; border-top: 1px solid #587ab0; border-bottom: 1px solid #50688b; background: linear-gradient(#e3eefb, #d3e5fb 35%, #bad5f8 40%, #d3e6fb 80%, #b9d3f2); color: #203569; }
.status > span { padding: 6px 9px 0 8px; border-right: 1px solid #9cb8dc; box-shadow: 1px 0 0 #f1f7fe; white-space: nowrap; }
.status > span + span { padding-left: 10px; }
.status .lang { display: flex; gap: 15px; padding: 6px 7px 0 14px; }
.status > .lang { padding-left: 12px; }
.lang svg { width: 22px; height: 20px; margin-top: -4px; }
.right { margin-left: auto; width: 334px; padding: 0 5px; display: flex; align-items: center; border-left: 1px solid #7897c4; background: linear-gradient(#c1d9f7, #a5c4f0 40%, #86aee3 45%, #a5c8f2); }
.views { display: flex; height: 23px; border: 1px solid #7d9bc4; border-radius: 2px; background: linear-gradient(#dce8f7, #bbd0eb); }
.views button { width: 22px; display: grid; place-items: center; border-right: 1px solid #c7d9ef; }
.views .on { background: linear-gradient(#fbe9be, #f4cc72); }
.views svg { width: 18px; height: 16px; }
.right label { margin: 0 9px 0 8px; }
.round { position: relative; flex: none; }
.round > svg:first-child { width: 20px; height: 20px; }
.cursor { position: absolute; left: 7px; top: 6px; width: 13px; height: 20px; z-index: 5; }
.slide { position: relative; flex: 1; height: 20px; display: flex; }
.slide::before { content: ""; position: absolute; left: 50%; top: 5px; width: 1px; height: 10px; background: #eef6ff; }
.slide input { appearance: none; width: 100%; margin: 0; background: linear-gradient(#d8e7fa, #d8e7fa) center / 100% 1px no-repeat; }
.slide input::-webkit-slider-thumb { appearance: none; width: 12px; height: 16px; border: 0; background: url("data:image/svg+xml,%3Csvg xmlns='http://www.w3.org/2000/svg' viewBox='0 0 12 16'%3E%3Cpath d='M1 1h10v10l-5 4-5-4z' fill='%23e4edf8' stroke='%2353698e'/%3E%3Cpath d='M6 4v7' stroke='%238093ae'/%3E%3C/svg%3E") no-repeat; }

.taskbar { height: 34px; flex: none; display: flex; align-items: stretch; padding-left: 11px; color: #fff; background: linear-gradient(90deg, #8298ad, #7c94a9 48%, #8ea3b0 60%, #839baf 85%, #8b9ca8); font-size: 14px; }
.start { width: 44px; height: 44px; margin: -8px 16px 0 0; position: relative; z-index: 3; }
.task { display: flex; align-items: center; gap: 4px; width: 160px; padding-left: 9px; border: 1px solid #41566c; border-radius: 3px; background: linear-gradient(#bac7d2, #93a6b6 50%, #8799aa); box-shadow: inset 0 0 0 1px #c6d1da; text-shadow: 0 0 3px #506070; }
.task svg { width: 20px; height: 20px; }
.task.on { background: linear-gradient(#d1dae2, #b4c0cb 60%, #aab8c4); border-left-color: #cbd5df; }
.pin { margin-left: 15px; }
.pin + .pin { margin: 0 15px 0 28px; }
.pin svg { width: 22px; height: 22px; }
.pair { display: flex; }
.tray { margin-left: auto; display: flex; align-items: center; gap: 10px; }
.tray svg { width: 20px; height: 20px; }
.ru { padding: 0 9px 4px 0; font: 14px/16px "Liberation Sans", sans-serif; }
.tray .t1 { width: 12px; height: 8px; margin-right: 8px; }
time { padding: 0 4px 0 11px; }
.desk { width: 13px; height: 34px; border: 1px solid #56687a; background: linear-gradient(#bdc9d3, #8b9ba9); }
```
